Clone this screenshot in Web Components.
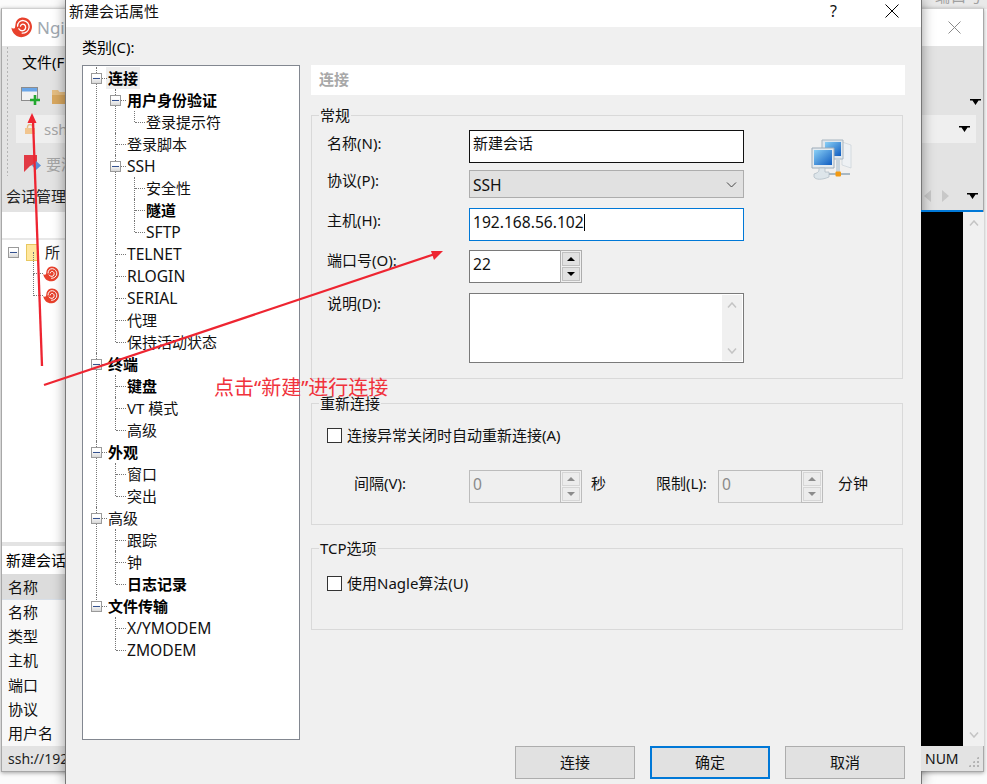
<!DOCTYPE html>
<html lang="zh">
<head>
<meta charset="utf-8">
<title>新建会话属性</title>
<style>
    html, body {
        margin: 0;
        height: 100%;
        overflow: hidden;
    }

    body {
        position: relative;
        width: 987px;
        height: 784px;
        background-color: #fbfbfb;
        color: #000;
        font: 15px/22px "Noto Sans", "Noto Sans CJK SC", sans-serif;
    }
</style>
</head>
<body>

<desk-strip>端口号</desk-strip>

<app-window></app-window>

<session-dialog>
    <tree-node slot="tree" label="连接" bold selected open>
        <tree-node label="用户身份验证" bold open>
            <tree-node label="登录提示符"></tree-node>
        </tree-node>
        <tree-node label="登录脚本"></tree-node>
        <tree-node label="SSH" latin open>
            <tree-node label="安全性"></tree-node>
            <tree-node label="隧道" bold></tree-node>
            <tree-node label="SFTP" latin></tree-node>
        </tree-node>
        <tree-node label="TELNET" latin></tree-node>
        <tree-node label="RLOGIN" latin></tree-node>
        <tree-node label="SERIAL" latin></tree-node>
        <tree-node label="代理"></tree-node>
        <tree-node label="保持活动状态"></tree-node>
    </tree-node>
    <tree-node slot="tree" label="终端" bold open>
        <tree-node label="键盘" bold></tree-node>
        <tree-node label="VT 模式"></tree-node>
        <tree-node label="高级"></tree-node>
    </tree-node>
    <tree-node slot="tree" label="外观" bold open>
        <tree-node label="窗口"></tree-node>
        <tree-node label="突出"></tree-node>
    </tree-node>
    <tree-node slot="tree" label="高级" open>
        <tree-node label="跟踪"></tree-node>
        <tree-node label="钟"></tree-node>
        <tree-node label="日志记录" bold></tree-node>
    </tree-node>
    <tree-node slot="tree" label="文件传输" bold open last>
        <tree-node label="X/YMODEM" latin></tree-node>
        <tree-node label="ZMODEM" latin></tree-node>
    </tree-node>

    <group-box slot="pane" label="常规" style="height:264px;margin-top:20px">
        <general-form></general-form>
    </group-box>
    <group-box slot="pane" label="重新连接" style="height:122px;margin-top:24px">
        <reconnect-form></reconnect-form>
    </group-box>
    <group-box slot="pane" label="TCP选项" style="height:82px;margin-top:23px">
        <check-box style="margin:23px 0 0 15px">使用Nagle算法(U)</check-box>
    </group-box>
</session-dialog>

<red-notes></red-notes>

<script>
// 下拉小三角
const TRI = `<svg width="11" height="6" viewBox="0 0 11 6"><path d="M0 0H11V1.500H8.500L5.500 6L2.500 1.500H0Z" fill="#000"/></svg>`;

// 蜗牛图标
const SNAIL = `<svg width="16" height="16" viewBox="0 0 16 16">
    <path d="M.3 8C.8 13 5 15.800 9 15.300C13 14.800 16 11.200 16 7.500C16 3.500 13 .4 9 .4C6.500 .4 4.200 2 3.600 4.500L3 8.300C2 8.900 1 8.800 .3 8Z" fill="#e8412c"/>
    <path d="M5 7C5 4.200 7 2.500 9.500 2.700C12.300 3 14 5.500 13.800 8C13.500 10.500 11 12.500 8.500 12.300M7.200 7C7.500 5.500 9 5 10.200 5.800C11.500 6.800 11.500 9 10 10C8.800 10.700 7 10.300 6 9" fill="none" stroke="#fff" stroke-width="1" stroke-linecap="round"/>
</svg>`;

// 窗口上方露出的一条
customElements.define("desk-strip", class extends HTMLElement {
    constructor() {
        super();
        this.attachShadow({ mode: "open" }).innerHTML = /*html*/ `
        <style>
            :host {
                display: block;
                position: absolute;
                left: 921px;
                top: 0;
                width: 66px;
                height: 9px;
                overflow: hidden;
                background-color: #e9e9e9;
                color: #a0a0a0;
                font-size: 15px;
                line-height: 22px;
                padding-left: 14px;
                box-sizing: border-box;
            }
            div { margin-top: -15px; letter-spacing: 1px; }
        </style>
        <div><slot></slot></div>`;
    }
});

// 后面的主窗口
const appTemplate = document.createElement("template");
appTemplate.innerHTML = /*html*/ `
<style>
    :host {
        display: flex;
        flex-direction: column;
        position: absolute;
        left: 1px;
        top: 8px;
        width: 983px;
        height: 764px;
        box-sizing: border-box;
        border: 1px solid #a8a8a8;
        border-top-color: #d0d0d0;
        background-color: #fff;
        box-shadow: 0 1px 4px rgba(0, 0, 0, 0.35);
        font-size: 15px;
        line-height: 20px;
    }

    .title {
        flex: none;
        height: 37px;
        display: flex;
        align-items: center;
        gap: 5px;
        padding: 0 0 0 9px;
        color: #a0a8b0;
        font-size: 17px;
    }

    .title svg:first-child {
        width: 21px;
        height: 21px;
    }

    .title .close {
        margin-left: auto;
        margin-right: 22px;
    }

    .bars {
        flex: none;
        height: 166px;
        background-color: #e3e3e3;
        display: flex;
        flex-direction: column;
        position: relative;
    }

    .row {
        display: flex;
        align-items: center;
        padding-left: 20px;
    }

    .menu { height: 31px; color: #000; }
    .tools { height: 38px; gap: 11px; padding-left: 19px; }

    .addr {
        height: 28px;
        flex: none;
        margin: 0 7px 0 14px;
        padding-left: 9px;
        background-color: #efefef;
        gap: 9px;
        color: #a5a5a5;
    }

    .addr svg:last-child { margin-left: auto; margin-right: 6px; }

    .quick { height: 33px; gap: 5px; color: #a5a5a5; padding-left: 22px; margin-top: 4px; }

    .tabs {
        flex: 1;
        display: flex;
        align-items: center;
        padding-left: 4px;
        color: #222;
    }

    .tabs .arrows {
        margin-left: auto;
        display: flex;
        align-items: center;
        gap: 11px;
        margin-right: 5px;
    }

    .tabs .arrows span {
        margin-left: 7px;
        line-height: 0;
    }

    .grip {
        position: absolute;
        left: 4px;
        top: 0;
        width: 3px;
        height: 130px;
        background-image: radial-gradient(#b5b5b5 0.9px, transparent 1px);
        background-size: 3px 4px;
    }

    .menu-tri {
        position: absolute;
        right: 2px;
        top: 53px;
        line-height: 0;
    }

    .main {
        flex: 1;
        min-height: 0;
        display: grid;
        grid-template-columns: 919px 1fr;
    }

    .session {
        display: flex;
        flex-direction: column;
        min-width: 0;
    }

    .session-search {
        height: 26px;
        flex: none;
        border-bottom: 2px solid #e8e8e8;
    }

    .session-tree {
        flex: 1;
        padding: 1px 0 0 6px;
        color: #222;
    }

    .tree-row { display: flex; align-items: center; height: 22px; }

    .tree-row.sub {
        margin-left: 35px;
        position: relative;
    }

    .tree-row.sub::before {
        content: "";
        position: absolute;
        left: -10px;
        top: -11px;
        width: 9px;
        height: 21px;
        border-left: 1px dotted #777;
        border-bottom: 1px dotted #777;
    }

    .folder {
        width: 10px;
        height: 15px;
        background-color: #ffe79e;
        border: 1px solid #e8c860;
        margin: 0 7px 0 7px;
    }

    .exp {
        width: 9px;
        height: 9px;
        border: 1px solid #9a9a9a;
        background: linear-gradient(#fff 30%, #d8d8d8);
        display: flex;
        align-items: center;
        justify-content: center;
    }

    .exp i { width: 7px; height: 1px; background-color: #34518f; }

    .split { height: 4px; background-color: #e3e3e3; flex: none; }
    .session-head { height: 28px; flex: none; padding-left: 4px; display: flex; align-items: center; }

    .col-head {
        height: 26px;
        flex: none;
        background: #dcdcdc;
        padding-left: 6px;
        display: flex;
        align-items: center;
        color: #111;
        border-bottom: 1px solid #d8dfe8;
        box-sizing: border-box;
    }

    .rows {
        background-color: #f8f8f8;
        flex: none;
        height: 146px;
        padding-left: 6px;
        line-height: 24.200px;
        color: #111;
    }

    .rows div { height: 24.200px; }

    .term {
        display: flex;
        flex-direction: column;
        min-width: 0;
        position: relative;
        z-index: 1;
    }

    .term-body {
        flex: 1;
        display: grid;
        grid-template-columns: 42px 21px;
        background-color: #f0f0f0;
        border-top: 2px solid #0078d7;
        margin-top: -2px;
    }

    .black { background-color: #000; }

    .vbar {
        background-color: #f0f0f0;
        display: flex;
        flex-direction: column;
        justify-content: space-between;
        align-items: center;
        padding: 8px 0 8px;
    }

    .status {
        height: 25px;
        flex: none;
        background-color: #e3e3e3;
        display: flex;
        align-items: center;
        font-size: 14px;
        color: #222;
    }

    .status.left { padding-left: 6px; }
    .status.right { padding-left: 4px; color: #111; position: relative; }

    .sizer {
        position: absolute;
        right: 4px;
        bottom: 4px;
        width: 11px;
        height: 11px;
        background-image: radial-gradient(#b4b4b4 1.2px, transparent 1.3px);
        background-size: 4px 4px;
        clip-path: polygon(100% 0, 100% 100%, 0 100%);
    }
</style>

<div class="title">
    ${SNAIL}
    <span>Ngin</span>
    <svg class="close" width="13" height="13" viewBox="0 0 13 13"><path d="M.5 .5L12.500 12.500M12.500 .5L.5 12.500" stroke="#8a8a8a" fill="none"/></svg>
</div>

<div class="bars">
    <div class="grip"></div>
    <div class="row menu"><span>文件(F</span></div>
    <div class="row tools">
        <svg width="20" height="20" viewBox="0 0 20 20">
            <rect x=".5" y="1.500" width="16" height="13" fill="#f2f2f2" stroke="#8c8c8c"/>
            <rect x="1" y="2" width="15" height="3.500" fill="#6aa6e8"/>
            <path d="M14 9V19M9 14H19" stroke="#22a82e" stroke-width="2.600"/>
        </svg>
        <svg width="16" height="15" viewBox="0 0 16 15">
            <path d="M0 1H6L7.500 3H16V15H0Z" fill="#e4bd82"/>
            <path d="M0 6H16V15H0Z" fill="#d9a860"/>
        </svg>
    </div>
    <div class="row addr">
        <svg width="10" height="10" viewBox="0 0 10 10"><rect y="4" width="10" height="6" fill="#f1c58f"/><path d="M2.500 4V3A2.500 2.500 0 0 1 7.500 3V4" stroke="#e8bb85" stroke-width="1.400" fill="none"/></svg>
        <span>ssh</span>
        ${TRI}
    </div>
    <div class="row quick">
        <svg width="17" height="18" viewBox="0 0 17 18"><path d="M0 0H13V8L6 11L0 17Z" fill="#e23a44"/><path d="M12 6L17 10.500L12 15L8 10.500Z" fill="#5b8fd6"/></svg>
        <span>要添</span>
    </div>
    <div class="tabs">
        <span>会话管理</span>
        <div class="arrows">
            <svg width="7" height="12" viewBox="0 0 7 12"><path d="M7 0V12L0 6Z" fill="#c8c8c8"/></svg>
            <svg width="7" height="12" viewBox="0 0 7 12"><path d="M0 0V12L7 6Z" fill="#c8c8c8"/></svg>
            <span>${TRI}</span>
        </div>
    </div>
    <div class="menu-tri">${TRI}</div>
</div>

<div class="main">
    <div class="session">
        <div class="session-search"></div>
        <div class="session-tree">
            <div class="tree-row"><span class="exp"><i></i></span><span class="folder"></span><span>所</span></div>
            <div class="tree-row sub">${SNAIL}</div>
            <div class="tree-row sub">${SNAIL}</div>
        </div>
        <div class="split"></div>
        <div class="session-head">新建会话</div>
        <div class="col-head">名称</div>
        <div class="rows">
            <div>名称</div>
            <div>类型</div>
            <div>主机</div>
            <div>端口</div>
            <div>协议</div>
            <div>用户名</div>
        </div>
        <div class="status left">ssh://192</div>
    </div>
    <div class="term">
        <div class="term-body">
            <div class="black"></div>
            <div class="vbar">
                <svg width="10" height="6" viewBox="0 0 10 6"><path d="M1 5.500L5 1L9 5.500" fill="none" stroke="#c4c4c4" stroke-width="1.500"/></svg>
                <svg width="10" height="6" viewBox="0 0 10 6"><path d="M1 .5L5 5L9 .5" fill="none" stroke="#c4c4c4" stroke-width="1.500"/></svg>
            </div>
        </div>
        <div class="status right">NUM<span class="sizer"></span></div>
    </div>
</div>
`;

customElements.define("app-window", class extends HTMLElement {
    constructor() {
        super();
        this.attachShadow({ mode: "open" });
        this.shadowRoot.append(appTemplate.content.cloneNode(true));
    }
});


// 树节点
const nodeTemplate = document.createElement("template");
nodeTemplate.innerHTML = /*html*/ `
<style>
    :host {
        display: block;
        position: relative;
        padding-left: 12px;
    }

    /* 竖线 */
    :host::before {
        content: "";
        position: absolute;
        left: 0;
        top: 0;
        bottom: 0;
        border-left: 1px dotted #777;
    }

    :host(:last-child)::before,
    :host([last])::before {
        bottom: auto;
        height: 11px;
    }

    .row {
        height: 22px;
        display: flex;
        align-items: center;
        position: relative;
    }

    /* 横线 */
    .row::before {
        content: "";
        position: absolute;
        left: -11px;
        width: 10px;
        top: 11px;
        border-top: 1px dotted #777;
    }

    .exp {
        position: absolute;
        left: -17px;
        top: 6px;
        width: 9px;
        height: 9px;
        border: 1px solid #9a9a9a;
        background: linear-gradient(#fff 30%, #d8d8d8);
        display: none;
    }

    .exp::after {
        content: "";
        position: absolute;
        left: 1px;
        right: 1px;
        top: 4px;
        height: 1px;
        background-color: #34518f;
    }

    :host([open]) .exp {
        display: block;
    }

    .kids {
        margin-left: 7px;
    }

    .label {
        white-space: nowrap;
        line-height: 22px;
        color: #111;
    }

    :host([latin]) .label {
        font-size: 15.600px;
    }

    :host([bold]) .label {
        font-weight: 700;
        color: #000;
        margin-top: -1px;
    }

    :host([selected]) .label {
        background-color: #eee;
        margin-left: -2px;
        margin-top: 0;
        padding: 0 2px;
    }
</style>
<div class="row"><span class="exp"></span><span class="label"></span></div>
<div class="kids"><slot></slot></div>
`;

customElements.define("tree-node", class extends HTMLElement {
    constructor() {
        super();
        this.attachShadow({ mode: "open" });
        this.shadowRoot.append(nodeTemplate.content.cloneNode(true));
        this.shadowRoot.querySelector(".label").textContent = this.getAttribute("label");
    }
});


// 分组框
const groupTemplate = document.createElement("template");
groupTemplate.innerHTML = /*html*/ `
<style>
    :host {
        display: block;
        position: relative;
        box-sizing: border-box;
        border: 1px solid #d9d9d9;
        margin-right: 2px;
    }

    .legend {
        position: absolute;
        left: 7px;
        top: -11px;
        padding: 0 1px;
        background-color: #f0f0f0;
        font-size: 15px;
        line-height: 20px;
        color: #111;
    }
</style>
<span class="legend"></span>
<slot></slot>
`;

customElements.define("group-box", class extends HTMLElement {
    constructor() {
        super();
        this.attachShadow({ mode: "open" });
        this.shadowRoot.append(groupTemplate.content.cloneNode(true));
        this.shadowRoot.querySelector(".legend").textContent = this.getAttribute("label");
    }
});


// 微调框
const spinTemplate = document.createElement("template");
spinTemplate.innerHTML = /*html*/ `
<style>
    :host {
        display: flex;
        box-sizing: border-box;
        height: 33px;
        font-size: 15.600px;
    }

    .value {
        flex: 1;
        box-sizing: border-box;
        border: 1px solid #7a7a7a;
        border-right: none;
        background-color: #fff;
        padding-left: 3px;
        line-height: 26px;
        color: #111;
    }

    .btns {
        flex: none;
        width: 22px;
        box-sizing: border-box;
        border: 1px solid #adadad;
        padding: 1px;
        display: flex;
        flex-direction: column;
        gap: 1px;
    }

    .btns span {
        flex: 1;
        background-color: #e1e1e1;
        border: 1px solid #c0c0c0;
        display: flex;
        align-items: center;
        justify-content: center;
    }

    :host([disabled]) .value {
        background-color: #efefef;
        border-color: #bcbcbc;
        color: #8a8a8a;
        border-bottom-color: #c8c8c8;
    }

    :host([disabled]) .btns {
        border-color: #bcbcbc;
    }

    :host([disabled]) .btns span {
        background-color: #ececec;
        border-color: #d6d6d6;
    }

    :host([disabled]) path {
        fill: #8c8c8c;
    }
</style>
<div class="value"><slot></slot></div>
<div class="btns">
    <span><svg width="8" height="4" viewBox="0 0 8 4"><path d="M4 0L8 4H0Z" fill="#000"/></svg></span>
    <span><svg width="8" height="4" viewBox="0 0 8 4"><path d="M0 0H8L4 4Z" fill="#000"/></svg></span>
</div>
`;

customElements.define("spin-box", class extends HTMLElement {
    constructor() {
        super();
        this.attachShadow({ mode: "open" });
        this.shadowRoot.append(spinTemplate.content.cloneNode(true));
    }
});


// 复选框
const checkTemplate = document.createElement("template");
checkTemplate.innerHTML = /*html*/ `
<style>
    :host {
        display: flex;
        align-items: center;
        gap: 5px;
        font-size: 15px;
        line-height: 22px;
        color: #111;
    }

    i {
        width: 13px;
        height: 13px;
        border: 1px solid #333;
        background-color: #fff;
    }
</style>
<i></i><span><slot></slot></span>
`;

customElements.define("check-box", class extends HTMLElement {
    constructor() {
        super();
        this.attachShadow({ mode: "open" });
        this.shadowRoot.append(checkTemplate.content.cloneNode(true));
    }
});


// 常规
const generalTemplate = document.createElement("template");
generalTemplate.innerHTML = /*html*/ `
<style>
    :host {
        display: grid;
        grid-template-columns: 142px 275px 1fr;
        grid-template-rows: 40px 38px 42px 43px 70px;
        align-items: start;
        padding: 14px 0 0 15px;
        font-size: 15px;
        color: #111;
    }

    label {
        grid-column: 1;
        line-height: 22px;
        margin-top: -1px;
    }

    label:nth-of-type(1) { margin-top: 2px; }
    label:nth-of-type(3) { margin-top: 1px; }

    .box {
        grid-column: 2;
        box-sizing: border-box;
        background-color: #fff;
        border: 1px solid #7a7a7a;
        padding-left: 3px;
        color: #111;
    }

    .name { border-color: #111; height: 33px; line-height: 25px; }

    .select {
        background-color: #e1e1e1;
        border-color: #adadad;
        height: 28px;
        line-height: 28px;
        font-size: 15.600px;
        display: flex;
        justify-content: space-between;
        padding-right: 6px;
    }

    .select svg { margin-top: 11px; }

    .host {
        border-color: #0078d7;
        height: 33px;
        line-height: 26px;
        font-size: 15.600px;
        display: flex;
    }

    .host i {
        width: 1px;
        height: 17px;
        margin-top: 5px;
        background-color: #000;
    }

    spin-box {
        grid-column: 2;
        width: 113px;
    }

    .memo {
        height: 70px;
        display: flex;
        justify-content: flex-end;
        padding: 1px;
    }

    .memo div {
        width: 20px;
        background-color: #f0f0f0;
        display: flex;
        flex-direction: column;
        justify-content: space-between;
        align-items: center;
        padding: 7px 0;
    }

    .pc {
        grid-column: 3;
        grid-row: 1 / span 2;
        margin: 9px 0 0 66px;
    }
</style>

<label>名称(N):</label>
<div class="box name">新建会话</div>
<svg class="pc" width="42" height="42" viewBox="0 0 42 42">
    <defs>
        <linearGradient id="sc" x1="0" y1="0" x2="1" y2="1"><stop offset="0" stop-color="#8ad0f6"/><stop offset="1" stop-color="#0f5cc0"/></linearGradient>
    </defs>
    <path d="M32 3L41 6V29L32 26Z" fill="#eef1f4" stroke="#c2ccd4" stroke-width=".6"/>
    <path d="M12 1H33V20H12Z" fill="#dfe7ee" stroke="#a9b6c0"/>
    <rect x="15" y="3" width="16" height="14" fill="url(#sc)"/>
    <path d="M26 19H30V34H26Z" fill="#c8d4dc"/>
    <path d="M2 9H24V29H2Z" fill="#e4ebf0" stroke="#9eacb8"/>
    <rect x="4" y="11" width="18" height="15" fill="url(#sc)"/>
    <path d="M9 29H15V33H19V38C12 41 6 41 4 38V35C7 34 9 33 9 31Z" fill="#dde5ea" stroke="#b3bec6" stroke-width=".8"/>
    <path d="M19 35H40" stroke="#a8b8c4" stroke-width="2"/>
    <rect x="25.500" y="32.500" width="5.500" height="5" rx="1" fill="#f39a12"/>
</svg>

<label>协议(P):</label>
<div class="box select">
    <span>SSH</span>
    <svg width="11" height="6" viewBox="0 0 11 6"><path d="M1 .5L5.500 5L10 .5" fill="none" stroke="#444" stroke-width="1"/></svg>
</div>

<label>主机(H):</label>
<div class="box host">192.168.56.102<i></i></div>

<label>端口号(O):</label>
<spin-box>22</spin-box>

<label>说明(D):</label>
<div class="box memo">
    <div>
        <svg width="10" height="6" viewBox="0 0 10 6"><path d="M1 5.500L5 1L9 5.500" fill="none" stroke="#c4c4c4" stroke-width="1.500"/></svg>
        <svg width="10" height="6" viewBox="0 0 10 6"><path d="M1 .5L5 5L9 .5" fill="none" stroke="#c4c4c4" stroke-width="1.500"/></svg>
    </div>
</div>
`;

customElements.define("general-form", class extends HTMLElement {
    constructor() {
        super();
        this.attachShadow({ mode: "open" });
        this.shadowRoot.append(generalTemplate.content.cloneNode(true));
    }
});


// 重新连接
const reconnectTemplate = document.createElement("template");
reconnectTemplate.innerHTML = /*html*/ `
<style>
    :host {
        display: block;
        padding: 20px 0 0 15px;
        font-size: 15px;
        color: #111;
    }

    .line {
        display: grid;
        grid-template-columns: 115px 113px 74px 62px 105px auto;
        align-items: center;
        margin: 24px 0 0 27px;
    }

    .line span { margin-bottom: 8px; }
    .line span:nth-child(3) { padding-left: 9px; }
    .line span:nth-child(6) { padding-left: 15px; }
</style>
<check-box>连接异常关闭时自动重新连接(A)</check-box>
<div class="line">
    <span>间隔(V):</span>
    <spin-box disabled>0</spin-box>
    <span>秒</span>
    <span>限制(L):</span>
    <spin-box disabled>0</spin-box>
    <span>分钟</span>
</div>
`;

customElements.define("reconnect-form", class extends HTMLElement {
    constructor() {
        super();
        this.attachShadow({ mode: "open" });
        this.shadowRoot.append(reconnectTemplate.content.cloneNode(true));
    }
});


// 对话框
const dialogTemplate = document.createElement("template");
dialogTemplate.innerHTML = /*html*/ `
<style>
    :host {
        display: grid;
        grid-template-rows: 27px 1fr;
        position: absolute;
        left: 65px;
        top: 0;
        width: 857px;
        height: 784px;
        box-sizing: border-box;
        border-left: 1px solid #777;
        border-right: 1px solid #777;
        background-color: #f0f0f0;
        box-shadow: 0 0 12px rgba(0, 0, 0, 0.4);
    }

    .titlebar {
        background-color: #fff;
        display: flex;
        align-items: center;
        padding: 0 0 5px 3px;
        font-size: 15px;
        color: #111;
    }

    .titlebar .help {
        margin-left: auto;
        width: 14px;
        font-size: 16px;
    }

    .titlebar svg {
        margin: 0 22px 0 41px;
    }

    .body {
        display: flex;
        flex-direction: column;
        min-height: 0;
        padding: 10px 16px 5px 16px;
    }

    .content {
        flex: 1;
        min-height: 0;
        display: grid;
        grid-template-columns: 218px 594px;
        column-gap: 11px;
    }

    .cat {
        font-size: 15px;
        line-height: 20px;
        margin-bottom: 8px;
    }

    .tree {
        box-sizing: border-box;
        height: 675px;
        background-color: #fff;
        border: 1px solid #828790;
        padding: 1px 0 0 13px;
        overflow: hidden;
    }

    .pane {
        display: flex;
        flex-direction: column;
    }

    .pane-head {
        height: 30px;
        background-color: #fff;
        padding-left: 8px;
        font-size: 15px;
        font-weight: 700;
        line-height: 28px;
        color: #a8a8a8;
    }

    .buttons {
        flex: none;
        display: flex;
        justify-content: flex-end;
        gap: 15px;
    }

    button {
        width: 120px;
        height: 33px;
        box-sizing: border-box;
        background-color: #e1e1e1;
        border: 1px solid #adadad;
        font: inherit;
        font-size: 15px;
        line-height: 20px;
        color: #111;
        padding: 0 0 2px;
    }

    button.main {
        border: 2px solid #0078d7;
    }
</style>

<div class="titlebar">
    <span>新建会话属性</span>
    <span class="help">?</span>
    <svg width="14" height="14" viewBox="0 0 14 14"><path d="M.5 .5L13.500 13.500M13.500 .5L.5 13.500" stroke="#000" fill="none"/></svg>
</div>
<div class="body">
    <div class="cat">类别(C):</div>
    <div class="content">
        <div class="tree"><slot name="tree"></slot></div>
        <div class="pane">
            <div class="pane-head">连接</div>
            <slot name="pane"></slot>
        </div>
    </div>
    <div class="buttons">
        <button>连接</button>
        <button class="main">确定</button>
        <button>取消</button>
    </div>
</div>
`;

customElements.define("session-dialog", class extends HTMLElement {
    constructor() {
        super();
        this.attachShadow({ mode: "open" });
        this.shadowRoot.append(dialogTemplate.content.cloneNode(true));
    }
});


// 红色批注
const notesTemplate = document.createElement("template");
notesTemplate.innerHTML = /*html*/ `
<style>
    :host {
        display: block;
        position: absolute;
        inset: 0;
        pointer-events: none;
    }

    svg {
        position: absolute;
        left: 0;
        top: 0;
    }

    span {
        position: absolute;
        left: 214px;
        top: 377px;
        font-size: 20px;
        line-height: 22px;
        color: #f0323c;
        white-space: nowrap;
    }
</style>
<svg width="987" height="784" viewBox="0 0 987 784">
    <path d="M42 366L33 120" stroke="#ee2531" stroke-width="2.300" fill="none"/>
    <path d="M32 113L36.500 123L27.500 123Z" fill="#ee2531"/>
    <path d="M44 385L435 254" stroke="#ee2531" stroke-width="2.300" fill="none"/>
    <path d="M443 251L434 260L431 251Z" fill="#ee2531"/>
</svg>
<span>点击“新建”进行连接</span>
`;

customElements.define("red-notes", class extends HTMLElement {
    constructor() {
        super();
        this.attachShadow({ mode: "open" });
        this.shadowRoot.append(notesTemplate.content.cloneNode(true));
    }
});
</script>
</body>
</html>
